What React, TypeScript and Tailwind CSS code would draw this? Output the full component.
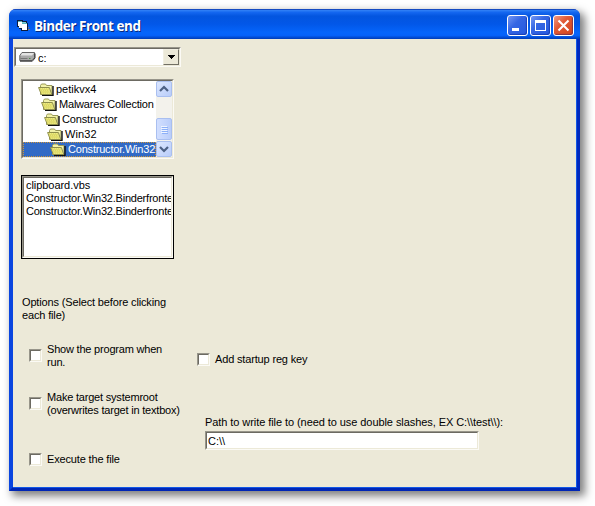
import React from "react";

function AppIcon() {
  return (
    <svg width="14" height="14" viewBox="0 0 14 14" shapeRendering="crispEdges" className="shrink-0">
      <path d="M0 1h6v1h4v2h1v8H4v-2H2V8H0z" fill="#0b1c40" />
      <path d="M1 2h4v1H1z" fill="#58b4be" />
      <path d="M1 3h5v4H1z" fill="#fff" />
      <path d="M5 3h4v1H5z" fill="#78d2d2" />
      <path d="M2 5h4v4H2z" fill="#f2f9fb" />
      <path d="M5 5h5v6H5z" fill="#fff" />
      <path d="M5 4h5v1H5z" fill="#58b4be" />
      <path d="M11 8h1v1h-1zM11 10h2v1h-2z" fill="#7b7770" />
    </svg>
  );
}

function DriveIcon() {
  return (
    <svg width="17" height="12" viewBox="0 0 17 12" className="shrink-0">
      <path d="M3 1.5h12.5v5L13 9.5H.8V4.5z" fill="#a9a9a9" stroke="#666" />
      <path d="M3.2 2H15l-2 2.5H1.5z" fill="#e4e4e4" />
      <path d="M1.5 7.5h7" stroke="#777" />
      <path d="M10 7.5h1.5" stroke="#4a8b4a" />
      <path d="M1 10.2h12.3L16 7V2.5" fill="none" stroke="#333" />
    </svg>
  );
}

function FolderIcon() {
  return (
    <svg width="17" height="13" viewBox="0 0 17 13" className="shrink-0">
      <path d="M2.5 11.5v-9l1-1.5h4l1 1.5h5.5v9z" fill="#f1f1a8" stroke="#9a9a58" />
      <path d="M15 3v9.3H4" fill="none" stroke="#111" strokeWidth="1.4" />
      <path d="M.6 4.5h10.8l2.3 7H3.3z" fill="#ecec86" stroke="#8e8e4c" />
      <path d="M2 6h8.8M2.6 8h8.8M3.2 10h8.8" stroke="#d2ca4e" strokeDasharray="1 1" />
      <path d="M2 7h8.8M2.6 9h8.8" stroke="#d2ca4e" strokeDasharray="1 1" strokeDashoffset="1" />
    </svg>
  );
}

const captionButton =
  "relative h-[21px] w-[21px] rounded-[3px] border border-white shadow-[inset_-1px_-1px_1px_rgba(0,20,120,0.4)]";

function TitleBar() {
  return (
    <header className="flex h-[30px] items-center rounded-t-[7px] bg-[linear-gradient(180deg,#0831a8_0%,#2d7df5_5%,#1467f0_11%,#0355df_24%,#0257e8_50%,#0565fb_78%,#0562fa_88%,#0148cd_96%,#003cb5_100%)] pl-[8px] pr-[6px]">
      <span className="mt-[3px]">
        <AppIcon />
      </span>
      <h1 className="ml-[3px] mt-[3px] grow whitespace-nowrap font-['Open_Sans',sans-serif] text-[13.5px] font-bold leading-[18px] tracking-[-0.45px] text-white [text-shadow:1px_1px_0_#092a7d]">
        Binder Front end
      </h1>
      <div className="mt-[3px] flex gap-[2px]">
        <button aria-label="Minimize" className={captionButton + " bg-[linear-gradient(135deg,#7397f4,#3566e3_40%,#2459df)]"}>
          <svg className="block" width="19" height="19"><path d="M4 12h7v3H4z" fill="#fff" /></svg>
        </button>
        <button aria-label="Maximize" className={captionButton + " bg-[linear-gradient(135deg,#7397f4,#3566e3_40%,#2459df)]"}>
          <svg className="block" width="19" height="19"><path fillRule="evenodd" d="M4 4h11v11H4zM5 7v7h9V7z" fill="#fff" /></svg>
        </button>
        <button aria-label="Close" className={captionButton + " bg-[linear-gradient(135deg,#ee9a83,#e05a36_40%,#d4441c)]"}>
          <svg className="block" width="19" height="19"><path d="M4.5 4.5l10 10M14.5 4.5l-10 10" stroke="#fff" strokeWidth="2.1" /></svg>
        </button>
      </div>
    </header>
  );
}

const sunken = "border border-t-[#97958a] border-l-[#97958a] border-b-[#fbfaf5] border-r-[#fbfaf5]";
const sunkenInner = "border border-t-[#6c6a62] border-l-[#6c6a62] border-b-[#ece9d8] border-r-[#ece9d8]";

function CheckBox({ label, spacing, box = "" }: { label: React.ReactNode; spacing: string; box?: string }) {
  return (
    <label className="flex items-center gap-[5px]">
      <span className={"h-[13px] w-[13px] shrink-0 " + sunken + " " + box}>
        <span className={"block h-[11px] w-[11px] bg-white " + sunkenInner} />
      </span>
      <span className={"whitespace-nowrap " + spacing}>{label}</span>
    </label>
  );
}

const folders = [
  { name: "petikvx4", indent: "pl-[15px]", text: "tracking-[0px]" },
  { name: "Malwares Collection", indent: "pl-[18px]", text: "tracking-[-0.2px]" },
  { name: "Constructor", indent: "pl-[21px]", text: "tracking-[-0.15px]" },
  { name: "Win32", indent: "pl-[24px]", text: "tracking-[0.1px]" },
  { name: "Constructor.Win32", indent: "pl-[27px]", text: "tracking-[-0.2px]" },
];

function ScrollArrow({ d }: { d: string }) {
  return (
    <div className="flex h-[16px] w-[16px] items-center justify-center rounded-[2px] border border-[#a9bff0] bg-[linear-gradient(135deg,#dce7ff,#b9cdfa)]">
      <svg width="10" height="8"><path d={d} fill="none" stroke="#4d6185" strokeWidth="2.2" /></svg>
    </div>
  );
}

function DirectoryList() {
  return (
    <div className={"ml-[8px] mt-[12px] h-[80px] w-[153px] " + sunken}>
      <div className={"flex h-[78px] w-[151px] bg-white " + sunkenInner}>
        <ul className="w-[133px] overflow-hidden pt-px">
          {folders.map((f, i) => (
            <li
              key={f.name}
              className={
                "flex h-[15px] items-center whitespace-nowrap " + f.indent +
                (i === 4 ? " bg-[#316ac5] text-white outline-1 -outline-offset-1 outline-dotted outline-[#ce953a]" : "")
              }
            >
              <FolderIcon />
              <span className={"ml-px " + f.text}>{f.name}</span>
            </li>
          ))}
        </ul>
        <div className="flex w-[16px] flex-col bg-[#f3f2ec]">
          <ScrollArrow d="M1 6l4-4 4 4" />
          <div className="grow" />
          <div className="flex h-[22px] w-[16px] flex-col items-center justify-center gap-px rounded-[2px] border border-[#a9bff0] bg-[linear-gradient(90deg,#d2dfff,#b9cdfa)]">
            {[0, 1, 2, 3].map((n) => (
              <i key={n} className="h-px w-[6px] bg-[#eef4ff] shadow-[1px_1px_0_#8cb0f8]" />
            ))}
          </div>
          <div className="h-px" />
          <ScrollArrow d="M1 2l4 4 4-4" />
        </div>
      </div>
    </div>
  );
}

function FileList() {
  return (
    <div className="ml-[8px] mt-[16px] h-[84px] w-[153px] border border-black">
      <div className={"h-[82px] w-[151px] " + sunken}>
        <div className={"h-[80px] w-[149px] overflow-hidden whitespace-nowrap bg-white pl-[2px] pt-px " + sunkenInner}>
          <p className="tracking-[-0.05px]">clipboard.vbs</p>
          <p className="tracking-[-0.22px]">Constructor.Win32.Binderfronte</p>
          <p className="tracking-[-0.22px]">Constructor.Win32.Binderfronte</p>
        </div>
      </div>
    </div>
  );
}

function DriveSelect() {
  return (
    <div className={"ml-px mt-[8px] h-[20px] w-[167px] " + sunken}>
      <div className={"flex h-[18px] w-[165px] items-center bg-white pl-[3px] " + sunkenInner}>
        <DriveIcon />
        <span className="ml-[2px] mt-[3px] grow">c:</span>
        <span className="flex h-[16px] w-[16px] items-center justify-center border border-b-[#716f64] border-l-[#f1efe2] border-r-[#716f64] border-t-[#f1efe2] bg-[#ece9d8]">
          <svg width="7" height="4" shapeRendering="crispEdges"><path d="M0 0h7L3.5 4z" fill="#000" /></svg>
        </span>
      </div>
    </div>
  );
}

export default function App() {
  return (
    <div className="h-[506px] w-[595px] overflow-hidden bg-white pl-[9px] pt-[9px] font-['Liberation_Sans',Arial,sans-serif] text-[11px] leading-[13px] text-black">
      <div className="h-[482px] w-[571px] rounded-t-[7px] bg-[#0831d9] shadow-[4px_4px_9px_1px_rgba(0,0,0,0.5)]">
        <TitleBar />
        <div className="h-[452px] border-x-4 border-b-4 border-b-[#0026b5] border-l-[#0a45df] border-r-[#0029be]">
          <main className="-mr-px flex h-[449px] w-[564px] border-b border-r border-[#1157e5] bg-[#ece9d8]">
            <section className="flex w-[184px] flex-col">
              <DriveSelect />
              <DirectoryList />
              <FileList />
              <p className="ml-[9px] mt-[37px] whitespace-nowrap tracking-[-0.15px]">
                Options (Select before clicking
                <br />
                each file)
              </p>
              <div className="ml-[16px] mt-[21px] flex flex-col">
                <CheckBox box="mb-[2px]" spacing="tracking-[-0.2px]" label={<>Show the program when<br />run.</>} />
                <div className="h-[22px]" />
                <CheckBox box="mb-[2px]" spacing="tracking-[-0.2px]" label={<>Make target systemroot<br />(overwrites target in textbox)</>} />
                <div className="h-[36px]" />
                <CheckBox spacing="tracking-[-0.15px]" label="Execute the file" />
              </div>
            </section>
            <section className="pt-[314px]">
              <CheckBox spacing="tracking-[-0.16px]" label="Add startup reg key" />
              <div className="ml-[8px] mt-[50px]">
                <p className="whitespace-nowrap tracking-[-0.07px]">{"Path to write file to (need to use double slashes, EX C:\\\\test\\\\):"}</p>
                <div className={"mt-[2px] h-[19px] w-[274px] " + sunken}>
                  <div className={"flex h-[17px] w-[272px] items-center bg-white pl-px pt-px " + sunkenInner}>{"C:\\\\"}</div>
                </div>
              </div>
            </section>
          </main>
        </div>
      </div>
    </div>
  );
}
